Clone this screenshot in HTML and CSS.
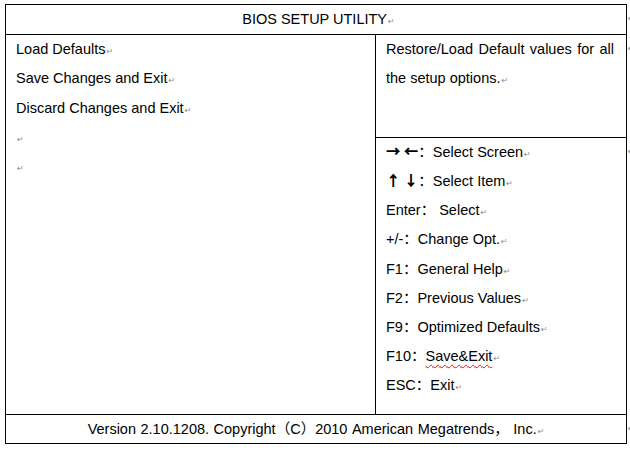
FILE: index.html
```html
<!DOCTYPE html>
<html>
<head>
<meta charset="utf-8">
<title>BIOS SETUP UTILITY</title>
<link rel="stylesheet" href="styles.css">
</head>
<body>
<div class="doc">
  <div class="row">
    <div class="cells title">BIOS SETUP UTILITY<span class="pm">↵</span></div>
    <div class="endcol"><span class="pm">↵</span></div>
  </div>
  <div class="row">
    <div class="cells main">
      <div class="left">
        <p>Load Defaults<span class="pm">↵</span></p>
        <p>Save Changes and Exit<span class="pm">↵</span></p>
        <p>Discard Changes and Exit<span class="pm">↵</span></p>
        <p><span class="pm">↵</span></p>
        <p><span class="pm">↵</span></p>
      </div>
      <div class="right">
        <div class="help">Restore/Load Default values for all the setup options.<span class="pm">↵</span></div>
        <div class="keys">
          <p><span class="cjk arrows">→ ←</span><span class="cjk">：</span>Select Screen<span class="pm">↵</span></p>
          <p><span class="cjk arrows">↑ ↓</span><span class="cjk">：</span>Select Item<span class="pm">↵</span></p>
          <p>Enter<span class="cjk">：</span> Select<span class="pm">↵</span></p>
          <p>+/-<span class="cjk">：</span>Change Opt.<span class="pm">↵</span></p>
          <p>F1<span class="cjk">：</span>General Help<span class="pm">↵</span></p>
          <p>F2<span class="cjk">：</span>Previous Values<span class="pm">↵</span></p>
          <p>F9<span class="cjk">：</span>Optimized Defaults<span class="pm">↵</span></p>
          <p>F10<span class="cjk">：</span><span class="spell">Save&amp;Exit</span><span class="pm">↵</span></p>
          <p>ESC<span class="cjk">：</span>Exit<span class="pm">↵</span></p>
        </div>
      </div>
    </div>
    <div class="endcol">
      <span class="pm">↵</span>
      <span class="pm second">↵</span>
    </div>
  </div>
  <div class="row">
    <div class="cells footer">Version 2.10.1208. Copyright<span class="cjk">（</span>C<span class="cjk">）</span>2010 American Megatrends<span class="cjk">，</span> Inc.<span class="pm">↵</span></div>
    <div class="endcol foot"><span class="pm">↵</span></div>
  </div>
</div>
</body>
</html>
```
FILE: styles.css
```css
html, body {
  margin: 0;
  padding: 0;
  background: #fff;
  overflow: hidden;
}
body {
  padding: 4px 0 0 5px;
  font-family: "Liberation Sans", Arial, sans-serif;
  font-size: 14.5px;
  color: #000;
}
p {
  margin: 0;
}
.doc {
  display: flex;
  flex-direction: column;
  width: 625px;
}
.row {
  display: flex;
}
.cells {
  box-sizing: border-box;
  width: 622px;
  border: 1px solid #000;
  border-bottom: none;
  flex: none;
}
.title {
  height: 30px;
  line-height: 29px;
  text-align: center;
  padding-left: 5px;
  white-space: nowrap;
}
.main {
  height: 380px;
  display: grid;
  grid-template-columns: 369px 250px;
  column-gap: 1px;
  background: #000;
}
.left {
  background: #fff;
  padding-left: 10px;
}
.left p {
  height: 29.25px;
  line-height: 29px;
}
.right {
  display: flex;
  flex-direction: column;
  gap: 1px;
  background: #000;
}
.help {
  background: #fff;
  height: 102px;
  box-sizing: border-box;
  padding: 0 12px 0 10px;
  line-height: 29px;
  text-align: justify;
}
.keys {
  background: #fff;
  flex: 1;
  padding-left: 10px;
  white-space: nowrap;
}
.keys p {
  height: 29.13px;
  line-height: 29px;
}
.footer {
  height: 30px;
  border-bottom: 1px solid #000;
  line-height: 28px;
  text-align: center;
  padding-left: 0;
  word-spacing: 0.5px;
  white-space: nowrap;
}
.cjk {
  font-family: "Noto Sans CJK SC", sans-serif;
  line-height: 1;
}
.arrows {
  font-weight: 900;
}
.spell {
  text-decoration: underline wavy #e01010;
  text-decoration-thickness: 1px;
  text-underline-offset: 3px;
}
.pm {
  font-family: "DejaVu Sans", sans-serif;
  font-size: 8px;
  line-height: 1;
  color: #8a8a8a;
  margin-left: 1px;
}
.endcol {
  width: 3px;
  overflow: hidden;
  display: flex;
  flex-direction: column;
  padding-left: 1px;
}
.endcol .pm {
  margin-left: 0;
  line-height: 29px;
  height: 29px;
}
.endcol .second {
  margin-top: 74px;
}
.endcol.foot {
  padding-top: 1px;
}
.endcol.foot .pm {
  line-height: 28px;
}
```
